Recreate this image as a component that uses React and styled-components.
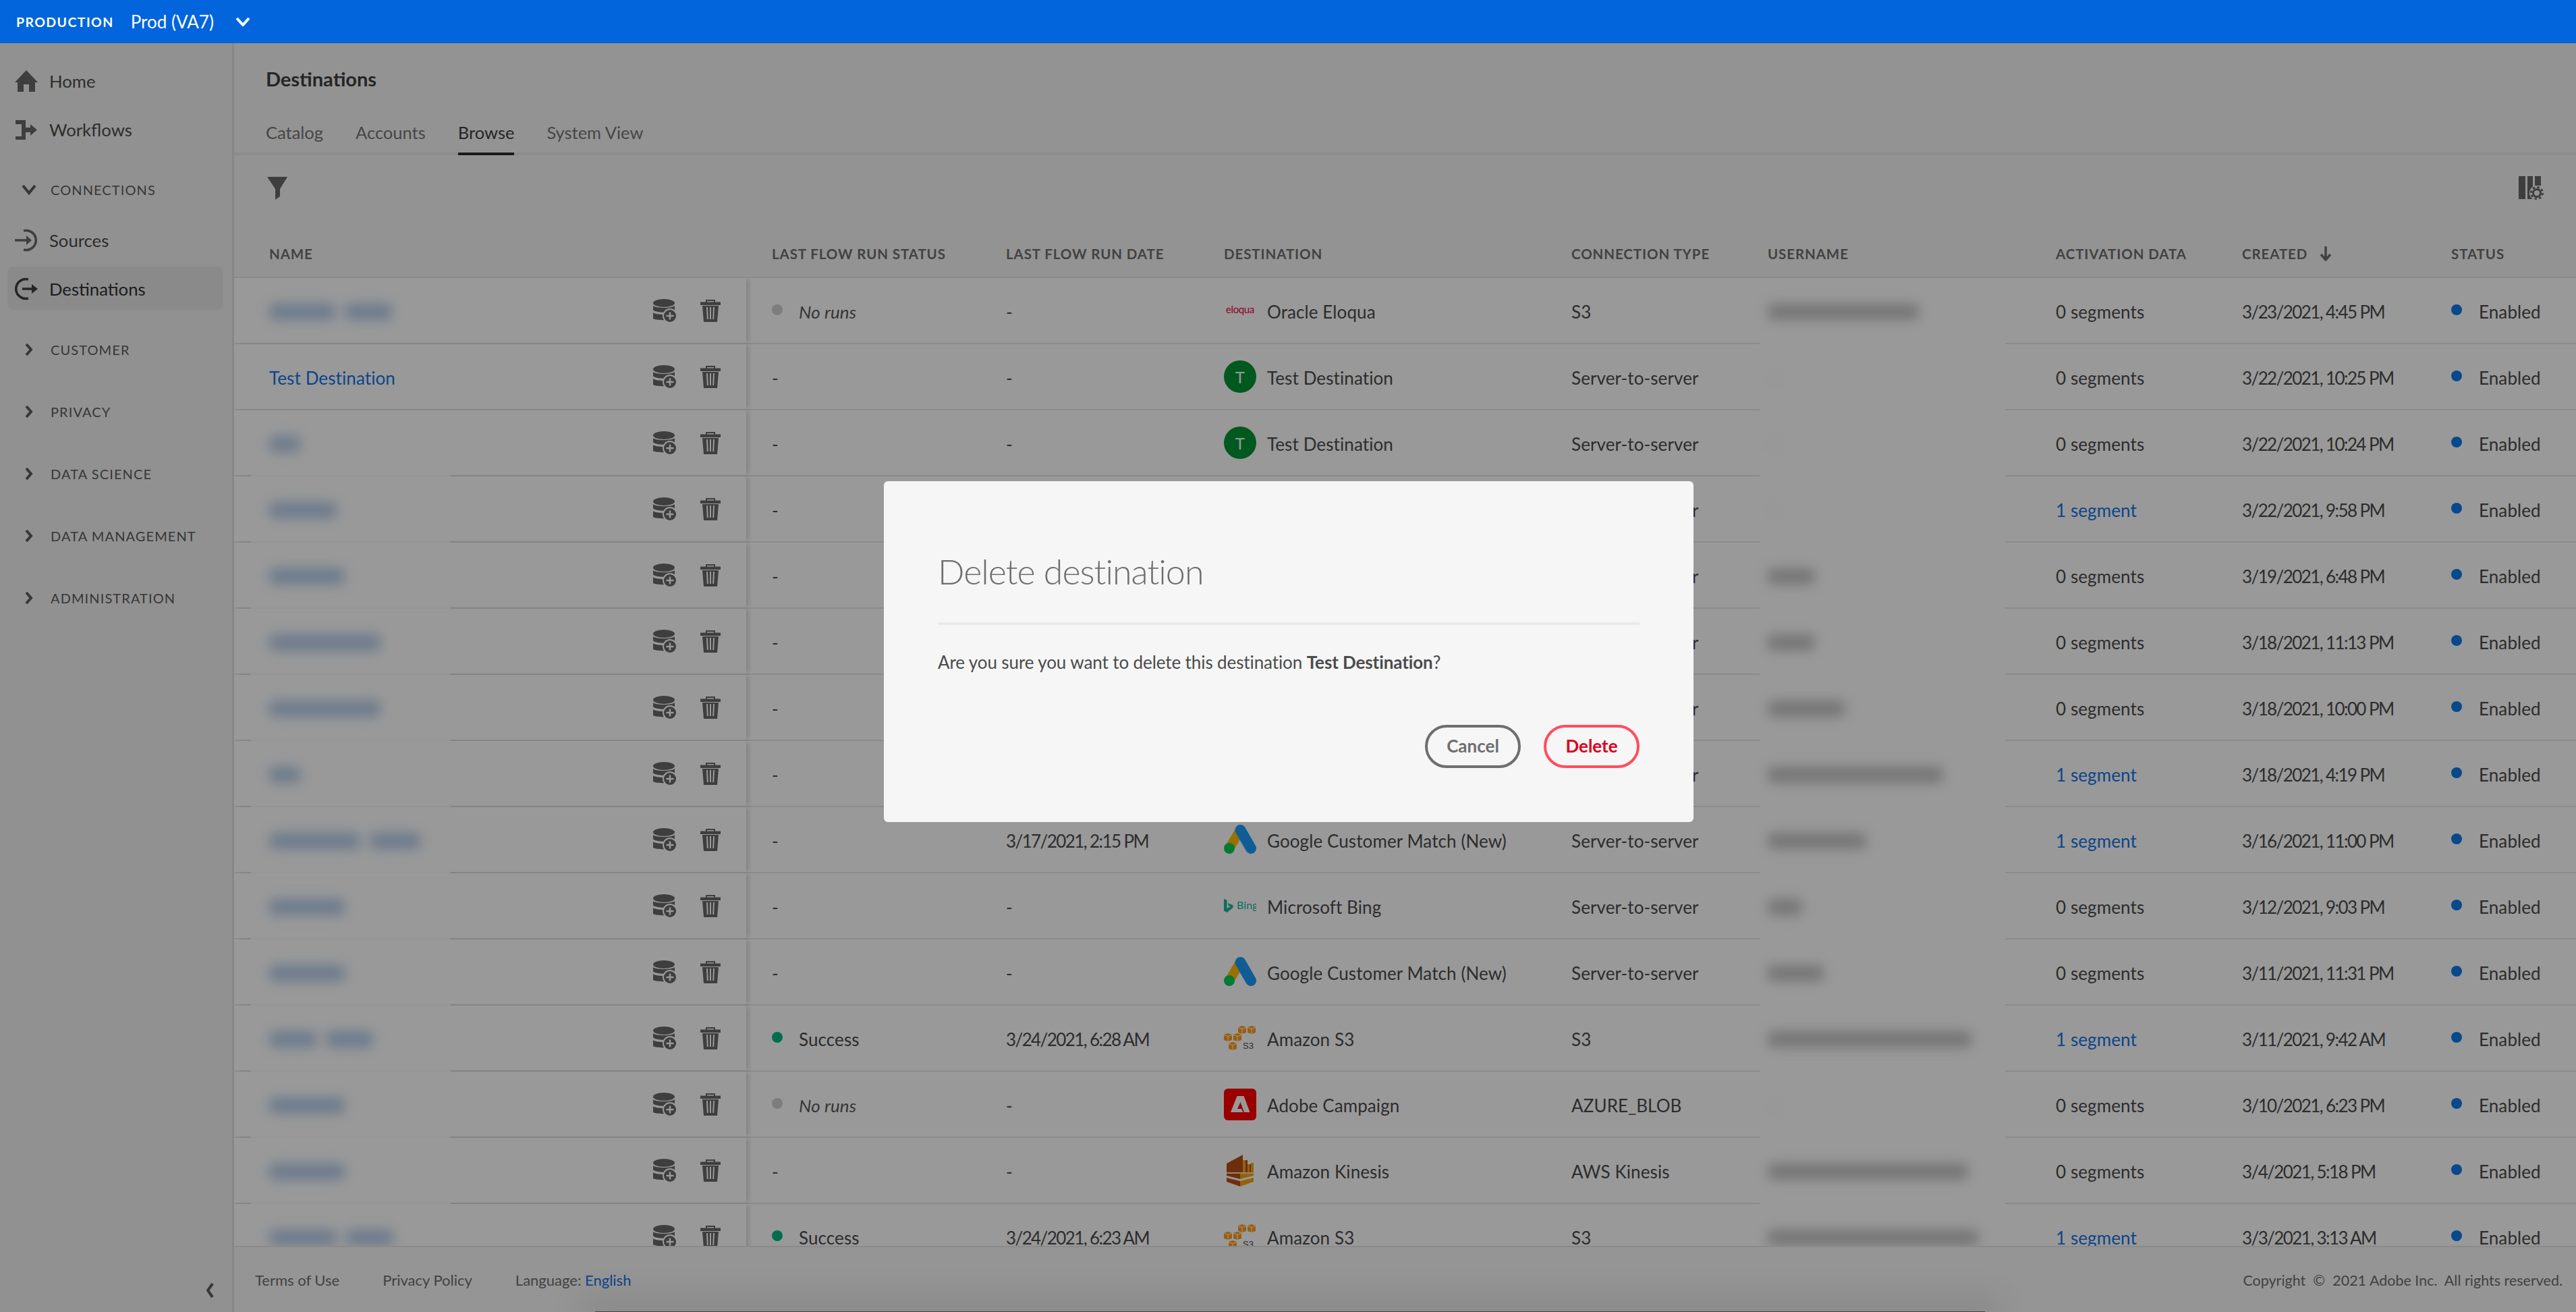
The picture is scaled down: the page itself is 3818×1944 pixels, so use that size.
import styled, { createGlobalStyle } from 'styled-components'

const GlobalStyle = createGlobalStyle`
  html, body, #root { margin: 0; padding: 0; height: 100%; }
  body { font-family: Lato, "Open Sans", sans-serif; overflow: hidden; background: #fff; }
`

const Page = styled.div`
  position: relative;
  display: flex;
  flex-direction: column;
  width: 3818px;
  height: 1944px;
  overflow: hidden;
`

const TopBar = styled.header`
  position: relative;
  z-index: 2;
  display: flex;
  align-items: center;
  flex: 0 0 64px;
  padding-left: 24px;
  background: #0265dc;
  color: #fff;
`
const OrgLabel = styled.span`
  font-size: 19.500px;
  font-weight: 700;
  letter-spacing: 1.4px;
`
const OrgName = styled.span`
  margin-left: 25px;
  font-size: 26px;
`
const OrgChevron = styled.svg`
  margin-left: 32px;
  width: 22px;
  height: 14px;
`

const Body = styled.div`
  display: flex;
  flex: 1;
  min-height: 0;
`

const Sidebar = styled.nav`
  display: flex;
  flex-direction: column;
  flex: 0 0 347px;
  box-sizing: border-box;
  padding-top: 19px;
  background: #f2f2f2;
  border-right: 3px solid #e1e1e1;
`
const NavItem = styled.div`
  display: flex;
  align-items: center;
  gap: 17px;
  height: 64px;
  box-sizing: border-box;
  margin: 4px 13px 4px 11px;
  padding: 2px 0 0 11px;
  border-radius: 8px;
  font-size: 25.700px;
  color: ${p => (p.$active ? '#303030' : '#4b4b4b')};
  background: ${p => (p.$active ? '#e6e6e6' : 'transparent')};
  svg { width: 34px; height: 34px; flex: none; }
`
const Section = styled.div`
  display: flex;
  align-items: center;
  height: 72px;
  margin-top: ${p => p.$top || 20}px;
  padding-left: 30px;
  font-size: 20px;
  letter-spacing: 1.1px;
  color: #5c5c5c;
  svg { width: 26px; height: 22px; margin-right: 19px; flex: none; }
`
const NavGroup = styled.div`
  display: flex;
  flex-direction: column;
  margin: 2px 0 -1px;
`
const CollapseBar = styled.div`
  display: flex;
  justify-content: flex-end;
  align-items: center;
  height: 64px;
  margin-top: auto;
  padding-right: 24px;
  svg { width: 16px; height: 24px; }
`

const Main = styled.main`
  display: flex;
  flex-direction: column;
  flex: 1;
  min-width: 0;
  background: #f5f5f5;
`
const Title = styled.h1`
  display: flex;
  align-items: center;
  flex: 0 0 105px;
  margin: 0;
  padding-left: 47px;
  font-size: 29px;
  font-weight: 700;
  color: #3f3f3f;
`
const Tabs = styled.div`
  display: flex;
  flex: 0 0 61px;
  box-sizing: border-box;
  gap: 48px;
  padding-left: 47px;
  border-bottom: 4px solid #e8e8e8;
`
const Tab = styled.div`
  display: flex;
  align-items: center;
  box-sizing: border-box;
  margin-bottom: -4px;
  padding-bottom: 4px;
  font-size: 25.500px;
  color: ${p => (p.$active ? '#3f3f3f' : '#757575')};
  border-bottom: 4px solid ${p => (p.$active ? '#2c2c2c' : 'transparent')};
`
const Toolbar = styled.div`
  display: flex;
  align-items: center;
  justify-content: space-between;
  flex: 0 0 98px;
  padding: 0 48px 0 49px;
`

const columns = '759px 385px 323px 515px 291px 427px 276px 310px 185px'

const TableHead = styled.div`
  display: grid;
  grid-template-columns: ${columns};
  align-items: center;
  flex: 0 0 84px;
  box-sizing: border-box;
  padding-top: 14px;
  border-bottom: 2px solid #e8e8e8;
`
const HeadCell = styled.div`
  display: flex;
  align-items: center;
  gap: 18px;
  font-size: 20.500px;
  font-weight: 700;
  letter-spacing: 0.9px;
  color: #6e6e6e;
  padding-left: ${p => p.$pad || 0}px;
`
const TableBody = styled.div`
  flex: 1;
  min-height: 0;
  overflow: hidden;
  background: #fff;
`
const Row = styled.div`
  display: grid;
  grid-template-columns: ${columns};
  height: 98px;
  box-sizing: border-box;
  border-bottom: 2px solid #e8e8e8;
  font-size: 26px;
  letter-spacing: 0.1px;
  color: #4b4b4b;
`
const Cell = styled.div`
  position: relative;
  display: flex;
  align-items: center;
  padding-top: 3px;
  padding-left: ${p => p.$pad || 0}px;
  white-space: nowrap;
`
const DateCell = styled(Cell)`
  letter-spacing: -1.600px;
`
const NameCell = styled(Cell)`
  z-index: 1;
  padding: 0 38px 0 52px;
  justify-content: space-between;
  background: #fff;
  box-shadow: 6px 0 6px -2px rgba(0, 0, 0, 0.14);
  > :first-child { margin-top: 4px; }
  &::after {
    content: '';
    display: ${p => (p.$patched ? 'block' : 'none')};
    position: absolute;
    left: 25px;
    width: 295px;
    bottom: -7px;
    height: 14px;
    background: #fff;
  }
`
const UserCell = styled(Cell)`
  &::after {
    content: '';
    position: absolute;
    left: -12px;
    width: 364px;
    bottom: -7px;
    height: 14px;
    background: #fff;
  }
`
const Smudges = styled.div`
  display: flex;
  gap: 14px;
`
const Smudge = styled.div`
  height: 24px;
  border-radius: 8px;
  background: ${p => p.$color};
  filter: blur(9px);
`
const Link = styled.span`
  color: #1473e6;
`
const Actions = styled.div`
  display: flex;
  align-items: center;
  gap: 36px;
`
const Dot = styled.span`
  flex: none;
  width: 16px;
  height: 16px;
  margin-top: -6px;
  margin-right: ${p => p.$gap}px;
  border-radius: 50%;
  background: ${p => p.$color};
`
const NoRuns = styled.em`
  font-style: italic;
  color: #5a5a5a;
`
const LogoSlot = styled.span`
  display: flex;
  align-items: center;
  justify-content: center;
  flex: none;
  width: 48px;
  margin: -3px 16px 0 0;
`
const TestBadge = styled.span`
  display: flex;
  align-items: center;
  justify-content: center;
  width: 48px;
  height: 48px;
  border-radius: 50%;
  background: #039534;
  color: #fff;
  font-size: 24px;
`
const EloquaMark = styled.span`
  font-size: 15px;
  letter-spacing: -0.4px;
  color: #f00048;
  margin-top: -4px;
`

const Footer = styled.footer`
  position: relative;
  display: flex;
  align-items: center;
  flex: 0 0 98px;
  box-sizing: border-box;
  padding: 1px 20px 0 31px;
  overflow: hidden;
  border-top: 2px solid #e6e6e6;
  background: #f8f8f8;
  font-size: 22px;
  color: #6e6e6e;
  &::after {
    content: '';
    position: absolute;
    left: 535px;
    width: 2060px;
    bottom: 0;
    height: 1px;
    background: #707070;
    box-shadow: 0 0 50px 22px rgba(0, 0, 0, 0.09);
  }
`
const FooterLink = styled.span`
  margin-right: 64px;
`
const Copyright = styled.span`
  margin-left: auto;
  font-size: 21.500px;
`

const Overlay = styled.div`
  position: absolute;
  inset: 0;
  z-index: 1;
  display: flex;
  align-items: center;
  justify-content: center;
  padding: 0 0 14px 2px;
  background: rgba(0, 0, 0, 0.4);
`
const Modal = styled.div`
  width: 1200px;
  box-sizing: border-box;
  padding: 100px 80px 80px;
  border-radius: 6px;
  background: #f6f6f6;
`
const ModalTitle = styled.h2`
  margin: 0;
  font-size: 52px;
  line-height: 66px;
  font-weight: 300;
  letter-spacing: -1px;
  color: #6e6e6e;
`
const ModalRule = styled.div`
  height: 4px;
  margin-top: 43px;
  background: #eaeaea;
`
const ModalText = styled.p`
  margin: 36px 0 0;
  font-size: 26px;
  line-height: 38px;
  letter-spacing: -0.1px;
  color: #4b4b4b;
  b { font-weight: 700; }
`
const ModalActions = styled.div`
  display: flex;
  justify-content: flex-end;
  gap: 34px;
  margin-top: 74px;
`
const Button = styled.button`
  width: 142px;
  height: 64px;
  padding: 0 0 2px;
  border: 4px solid ${p => (p.$danger ? '#ff4d5e' : '#6e6e6e')};
  border-radius: 32px;
  background: transparent;
  font-family: inherit;
  font-size: 26px;
  font-weight: 700;
  color: ${p => (p.$danger ? '#d7001f' : '#6e6e6e')};
`

const ICON = '#686868'

const Chevron = ({ dir = 'right', color = '#5c5c5c', width = 4 }) => {
  const d = {
    right: 'M9 3 L16 11 L9 19',
    down: 'M4 5 L13 16 L22 5',
    left: 'M11 2 L4 12 L11 22',
  }[dir]
  return (
    <svg viewBox={dir === 'left' ? '0 0 16 24' : '0 0 26 22'}>
      <path d={d} fill="none" stroke={color} strokeWidth={width} />
    </svg>
  )
}

const HomeIcon = () => (
  <svg viewBox="0 0 34 34">
    <path fill={ICON} d="M17 1 L34 19 L30 19 L30 33 L21 33 L21 22 L13 22 L13 33 L4 33 L4 19 L0 19 Z" />
  </svg>
)
const WorkflowIcon = () => (
  <svg viewBox="0 0 34 34">
    <path fill={ICON} d="M1 3h15v11h7V9l10 8.500-10 8.500v-5h-7v11H1v-5h9V9H1z" />
  </svg>
)
const SourceIcon = () => (
  <svg viewBox="0 0 34 34" fill="none" stroke={ICON} strokeWidth="3.500">
    <path d="M13 3 A14.500 14.500 0 1 1 13 31" />
    <path d="M0 17 H21" />
    <path fill={ICON} stroke="none" d="M17 10 L25 17 L17 24 Z" />
  </svg>
)
const DestIcon = () => (
  <svg viewBox="0 0 34 34" fill="none" stroke="#3f3f3f" strokeWidth="3.500">
    <path d="M20 3 A14.500 14.500 0 1 0 20 31" />
    <path d="M11 17 H30" />
    <path fill="#3f3f3f" stroke="none" d="M25 10 L34 17 L25 24 Z" />
  </svg>
)
const FilterIcon = () => (
  <svg width="30" height="34" viewBox="0 0 30 34">
    <path fill={ICON} d="M0 0H30L19 18V29L12 34V18Z" />
  </svg>
)
const ColumnsIcon = () => (
  <svg width="37" height="36" viewBox="0 0 37 36">
    <path fill={ICON} d="M0 0h10v34H0zM13 0h8v34h-8zM24 0h9v14h-9z" />
    <circle cx="27" cy="25" r="11" fill="#f5f5f5" />
    <circle cx="27" cy="25" r="5.500" fill="none" stroke={ICON} strokeWidth="3" />
    <circle cx="27" cy="25" r="8.500" fill="none" stroke={ICON} strokeWidth="3" strokeDasharray="3.300 3.400" />
  </svg>
)
const ArrowDown = () => (
  <svg width="18" height="22" viewBox="0 0 18 22">
    <path d="M9 0V19M2 12L9 20L16 12" fill="none" stroke="#6e6e6e" strokeWidth="3.500" />
  </svg>
)
const DataAddIcon = () => (
  <svg width="34" height="34" viewBox="0 0 34 34">
    <ellipse cx="16" cy="6" rx="16" ry="6" fill={ICON} />
    <path fill={ICON} d="M0 10c3 4 29 4 32 0v6C29 21 3 21 0 16zM0 20c3 4 29 4 32 0v9c-3 3-29 3-32 0z" />
    <circle cx="25" cy="25" r="11" fill="#fff" />
    <circle cx="25" cy="25" r="9" fill={ICON} />
    <path d="M25 19.500v11M19.500 25h11" stroke="#fff" strokeWidth="2.400" />
  </svg>
)
const TrashIcon = () => (
  <svg width="30" height="34" viewBox="0 0 30 34">
    <path fill="none" stroke={ICON} strokeWidth="2" d="M9 5V2h12v3" />
    <path fill={ICON} d="M0 4.500h30V9H0zM3 10h24l-2 24H5z" />
    <path stroke="#fff" strokeWidth="2" d="M10 12l.8 18M15 12v18M20 12l-.8 18" />
  </svg>
)

const GoogleLogo = () => (
  <svg width="48" height="44" viewBox="0 0 48 44">
    <path d="M24 8L8 35" stroke="#fcbc05" strokeWidth="14" strokeLinecap="round" />
    <path d="M24.500 8L40 35" stroke="#1b9cf9" strokeWidth="16" strokeLinecap="round" />
    <circle cx="8" cy="35" r="8" fill="#05cb58" />
  </svg>
)
const BingLogo = () => (
  <svg width="48" height="20" viewBox="0 0 48 20">
    <path fill="#15b89c" d="M0 0l4.500 1.600v12.400l5-2.800-2.500-1.200-1.500-3.700 8 2.800v4L4.500 20 0 17.500z" />
    <text x="19" y="15" fontSize="16" fontFamily="Lato, sans-serif" fill="#15b89c">Bing</text>
  </svg>
)
const Cube = ({ x, y }) => (
  <g transform={`translate(${x} ${y})`}>
    <path fill="#ff9b1a" d="M0 2l6-2 6 2v8l-6 2-6-2z" />
    <path stroke="#fff" strokeWidth="1" fill="none" d="M0 2.500l6 2 6-2M6 4.500V12" />
  </g>
)
const S3Logo = () => (
  <svg width="48" height="37" viewBox="0 0 48 37">
    <Cube x="21" y="0" />
    <Cube x="35" y="0" />
    <Cube x="0" y="11" />
    <Cube x="14" y="11" />
    <Cube x="7" y="24" />
    <text x="28" y="34" fontSize="13" fontFamily="Liberation Sans, sans-serif" fill="#4b4b4b">S3</text>
  </svg>
)
const AdobeLogo = () => (
  <svg width="48" height="47" viewBox="0 0 48 47">
    <rect width="48" height="47" rx="6" fill="#ff0000" />
    <path fill="#fff" d="M10 35L19.500 11H29.500L38.500 35H30L24.500 20L20 30H26L28.500 35Z" />
  </svg>
)
const KinesisLogo = () => (
  <svg width="40" height="47" viewBox="0 0 40 47">
    <path fill="#b84e16" d="M0 13L24 0V26H0z" />
    <path fill="#f5a31a" d="M24 8h7v18h-7zM31 14h5v12h-5zM36 12h4v14h-4z" />
    <path fill="#b84e16" d="M28 8h3v18h-3zM34 14h2v12h-2z" />
    <path fill="#ffe0b0" d="M0 26h40v2H0z" />
    <path fill="#b84e16" d="M0 28h20v8L0 31z" />
    <path fill="#f5a31a" d="M20 28h20v3L20 36z" />
    <path fill="#b84e16" d="M0 34l20 5v8L0 40z" />
    <path fill="#f5a31a" d="M40 34l-20 5v8l20-7z" />
  </svg>
)

const logos = {
  eloqua: <EloquaMark>eloqua</EloquaMark>,
  test: <TestBadge>T</TestBadge>,
  google: <GoogleLogo />,
  bing: <BingLogo />,
  s3: <S3Logo />,
  adobe: <AdobeLogo />,
  kinesis: <KinesisLogo />,
}

const SEG = '0 segments'
const ONE = '1 segment'
const SRV = 'Server-to-server'
const rows = [
  { name: [98, 70], run: 'none', date: '-', logo: 'eloqua', dest: 'Oracle Eloqua', type: 'S3', user: [224], act: SEG, created: '3/23/2021, 4:45 PM' },
  { link: 'Test Destination', run: '-', date: '-', logo: 'test', dest: 'Test Destination', type: SRV, act: SEG, created: '3/22/2021, 10:25 PM' },
  { name: [46], run: '-', date: '-', logo: 'test', dest: 'Test Destination', type: SRV, act: SEG, created: '3/22/2021, 10:24 PM' },
  { name: [100], run: '-', date: '-', logo: 'test', dest: 'Test Destination', type: SRV, act: ONE, created: '3/22/2021, 9:58 PM' },
  { name: [112], run: '-', date: '-', logo: 's3', dest: 'Amazon S3', type: SRV, user: [70], act: SEG, created: '3/19/2021, 6:48 PM' },
  { name: [165], run: '-', date: '-', logo: 's3', dest: 'Amazon S3', type: SRV, user: [70], act: SEG, created: '3/18/2021, 11:13 PM' },
  { name: [165], run: '-', date: '-', logo: 's3', dest: 'Amazon S3', type: SRV, user: [115], act: SEG, created: '3/18/2021, 10:00 PM' },
  { name: [46], run: '-', date: '-', logo: 's3', dest: 'Amazon S3', type: SRV, user: [260], act: ONE, created: '3/18/2021, 4:19 PM' },
  { name: [135, 75], run: '-', date: '3/17/2021, 2:15 PM', logo: 'google', dest: 'Google Customer Match (New)', type: SRV, user: [146], act: ONE, created: '3/16/2021, 11:00 PM' },
  { name: [112], run: '-', date: '-', logo: 'bing', dest: 'Microsoft Bing', type: SRV, user: [51], act: SEG, created: '3/12/2021, 9:03 PM' },
  { name: [112], run: '-', date: '-', logo: 'google', dest: 'Google Customer Match (New)', type: SRV, user: [83], act: SEG, created: '3/11/2021, 11:31 PM' },
  { name: [70, 70], run: 'ok', date: '3/24/2021, 6:28 AM', logo: 's3', dest: 'Amazon S3', type: 'S3', user: [302], act: ONE, created: '3/11/2021, 9:42 AM' },
  { name: [112], run: 'none', date: '-', logo: 'adobe', dest: 'Adobe Campaign', type: 'AZURE_BLOB', act: SEG, created: '3/10/2021, 6:23 PM' },
  { name: [112], run: '-', date: '-', logo: 'kinesis', dest: 'Amazon Kinesis', type: 'AWS Kinesis', user: [297], act: SEG, created: '3/4/2021, 5:18 PM' },
  { name: [100, 70], run: 'ok', date: '3/24/2021, 6:23 AM', logo: 's3', dest: 'Amazon S3', type: 'S3', user: [312], act: ONE, created: '3/3/2021, 3:13 AM' },
]

const RunStatus = ({ run }) => {
  if (run === 'none') return <><Dot $color="#d0d0d0" $gap={24} /><NoRuns>No runs</NoRuns></>
  if (run === 'ok') return <><Dot $color="#00b77f" $gap={24} />Success</>
  return '-'
}

const TableRow = ({ row, index }) => (
  <Row>
    <NameCell $patched={index >= 2}>
      {row.link ? <Link>{row.link}</Link> : (
        <Smudges>
          {row.name.map((w, i) => <Smudge key={i} $color="#b4cdea" style={{ width: w }} />)}
        </Smudges>
      )}
      <Actions><DataAddIcon /><TrashIcon /></Actions>
    </NameCell>
    <Cell $pad={38}><RunStatus run={row.run} /></Cell>
    <DateCell>{row.date}</DateCell>
    <Cell><LogoSlot>{logos[row.logo]}</LogoSlot>{row.dest}</Cell>
    <Cell>{row.type}</Cell>
    <UserCell>
      {row.user
        ? <Smudge $color="#c4c4c4" style={{ width: row.user[0] }} />
        : <Smudge $color="#fbfbfb" style={{ width: 20 }} />}
    </UserCell>
    <Cell>{row.act === ONE ? <Link>{row.act}</Link> : row.act}</Cell>
    <DateCell>{row.created}</DateCell>
    <Cell><Dot $color="#0c7ae8" $gap={25} />Enabled</Cell>
  </Row>
)

export default function App() {
  return (
    <Page>
      <GlobalStyle />
      <TopBar>
        <OrgLabel>PRODUCTION</OrgLabel>
        <OrgName>Prod (VA7)</OrgName>
        <OrgChevron viewBox="0 0 22 14">
          <path d="M2 2L11 12L20 2" fill="none" stroke="#fff" strokeWidth="4" />
        </OrgChevron>
      </TopBar>
      <Body>
        <Sidebar>
          <NavItem><HomeIcon />Home</NavItem>
          <NavItem><WorkflowIcon />Workflows</NavItem>
          <Section $top={18}><Chevron dir="down" />CONNECTIONS</Section>
          <NavGroup>
            <NavItem><SourceIcon />Sources</NavItem>
            <NavItem $active><DestIcon />Destinations</NavItem>
          </NavGroup>
          <Section><Chevron />CUSTOMER</Section>
          <Section><Chevron />PRIVACY</Section>
          <Section><Chevron />DATA SCIENCE</Section>
          <Section><Chevron />DATA MANAGEMENT</Section>
          <Section><Chevron />ADMINISTRATION</Section>
          <CollapseBar><Chevron dir="left" /></CollapseBar>
        </Sidebar>
        <Main>
          <Title>Destinations</Title>
          <Tabs>
            <Tab>Catalog</Tab>
            <Tab>Accounts</Tab>
            <Tab $active>Browse</Tab>
            <Tab>System View</Tab>
          </Tabs>
          <Toolbar><FilterIcon /><ColumnsIcon /></Toolbar>
          <TableHead>
            <HeadCell $pad={52}>NAME</HeadCell>
            <HeadCell $pad={38}>LAST FLOW RUN STATUS</HeadCell>
            <HeadCell>LAST FLOW RUN DATE</HeadCell>
            <HeadCell>DESTINATION</HeadCell>
            <HeadCell>CONNECTION TYPE</HeadCell>
            <HeadCell>USERNAME</HeadCell>
            <HeadCell>ACTIVATION DATA</HeadCell>
            <HeadCell>CREATED <ArrowDown /></HeadCell>
            <HeadCell>STATUS</HeadCell>
          </TableHead>
          <TableBody>
            {rows.map((row, i) => <TableRow key={i} row={row} index={i} />)}
          </TableBody>
          <Footer>
            <FooterLink>Terms of Use</FooterLink>
            <FooterLink>Privacy Policy</FooterLink>
            <span>Language: <Link>English</Link></span>
            <Copyright>Copyright&nbsp; ©&nbsp; 2021 Adobe Inc.&nbsp; All rights reserved.</Copyright>
          </Footer>
        </Main>
      </Body>
      <Overlay>
        <Modal>
          <ModalTitle>Delete destination</ModalTitle>
          <ModalRule />
          <ModalText>Are you sure you want to delete this destination <b>Test Destination</b>?</ModalText>
          <ModalActions>
            <Button>Cancel</Button>
            <Button $danger>Delete</Button>
          </ModalActions>
        </Modal>
      </Overlay>
    </Page>
  )
}
